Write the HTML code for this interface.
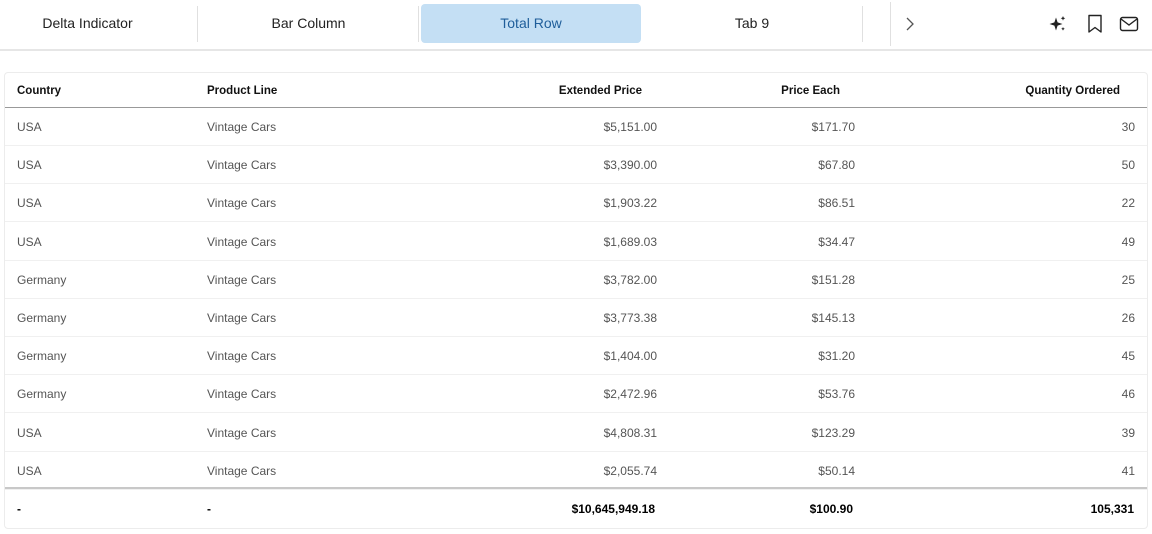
<!DOCTYPE html>
<html><head><style>
*{margin:0;padding:0;box-sizing:border-box}
body{width:1152px;height:534px;background:#fff;font-family:"Liberation Sans",sans-serif;position:relative;overflow:hidden}
.bar{position:absolute;left:0;top:0;width:1152px;height:51px;border-bottom:2px solid #e6e6e6}
.tab{position:absolute;top:4px;height:39px;line-height:39px;text-align:center;font-size:14px;color:#222}
.sep{position:absolute;top:6px;width:1px;height:36px;background:#e0e0e0}
.act{background:#c4dff4;color:#1f5e9a;border-radius:4px}
.card{position:absolute;left:4px;top:72px;width:1144px;height:457px;border:1px solid #ececec;border-radius:4px}
.row{position:absolute;left:0;width:1142px;height:38px;font-size:12px;color:#555;border-bottom:1px solid #f0f0f0}
.row span{position:absolute;top:0;line-height:38px;white-space:nowrap}
.hd{height:35px;color:#111;font-weight:bold;font-size:11.5px;border-bottom:1px solid #999}
.hd span{line-height:36px}
.r{text-align:right}
.tot{color:#000;font-weight:bold;border-bottom:none;height:40px}
.tot span{line-height:41px}
</style></head><body>
<div class="bar">
<div class="tab" style="left:0;width:175px">Delta Indicator</div>
<div class="sep" style="left:197px"></div>
<div class="tab" style="left:199px;width:219px">Bar Column</div>
<div class="sep" style="left:418px"></div>
<div class="tab act" style="left:421px;width:220px">Total Row</div>
<div class="tab" style="left:643px;width:218px">Tab 9</div>
<div class="sep" style="left:862px"></div>
<div class="sep" style="left:890px;top:2px;height:44px"></div>
<svg style="position:absolute;left:904px;top:17px" width="12" height="14" viewBox="0 0 12 14"><path d="M3 1l6 6-6 6" fill="none" stroke="#555" stroke-width="1.3"/></svg>
<svg style="position:absolute;left:1048px;top:14px" width="20" height="20" viewBox="0 0 20 20"><path d="M8 3.5l1.6 4.9 4.9 1.6-4.9 1.6L8 16.5l-1.6-4.9L1.5 10l4.9-1.6z" fill="#222"/><path d="M15 2l.7 1.6 1.6.7-1.6.7L15 6.6l-.7-1.6-1.6-.7 1.6-.7zM15 13l.6 1.2 1.2.6-1.2.6-.6 1.2-.6-1.2-1.2-.6 1.2-.6z" fill="#222"/></svg>
<svg style="position:absolute;left:1087px;top:14px" width="16" height="20" viewBox="0 0 16 20"><path d="M2 1.5h12v16.5l-6-4.5-6 4.5z" fill="none" stroke="#222" stroke-width="1.4" stroke-linejoin="round"/></svg>
<svg style="position:absolute;left:1119px;top:16px" width="20" height="16" viewBox="0 0 20 16"><rect x="1.5" y="1.5" width="17" height="13" rx="2" fill="none" stroke="#222" stroke-width="1.4"/><path d="M2 3l8 6 8-6" fill="none" stroke="#222" stroke-width="1.4"/></svg>
</div>
<div class="card">
<div class="row hd" style="top:0"><span style="left:12px">Country</span><span style="left:202px">Product Line</span><span class="r" style="right:505px">Extended Price</span><span class="r" style="right:307px">Price Each</span><span class="r" style="right:27px">Quantity Ordered</span></div>
<div id="rows"></div>
</div>
<script>
var d=[["USA","$5,151.00","$171.70","30"],["USA","$3,390.00","$67.80","50"],["USA","$1,903.22","$86.51","22"],["USA","$1,689.03","$34.47","49"],["Germany","$3,782.00","$151.28","25"],["Germany","$3,773.38","$145.13","26"],["Germany","$1,404.00","$31.20","45"],["Germany","$2,472.96","$53.76","46"],["USA","$4,808.31","$123.29","39"],["USA","$2,055.74","$50.14","41"]];
var h="";d.forEach(function(r,i){h+='<div class="row" style="top:'+(35+i*38.2)+'px"><span style="left:12px">'+r[0]+'</span><span style="left:202px">Vintage Cars</span><span style="right:490px">'+r[1]+'</span><span style="right:292px">'+r[2]+'</span><span style="right:12px">'+r[3]+'</span></div>'});
h+='<div style="position:absolute;left:0;top:414px;width:1142px;height:2px;background:#c8c8c8"></div>';
h+='<div class="row tot" style="top:416px"><span style="left:12px">-</span><span style="left:202px">-</span><span style="right:492px">$10,645,949.18</span><span style="right:294px">$100.90</span><span style="right:13px">105,331</span></div>';
document.getElementById("rows").outerHTML=h;
</script>
</body></html>
